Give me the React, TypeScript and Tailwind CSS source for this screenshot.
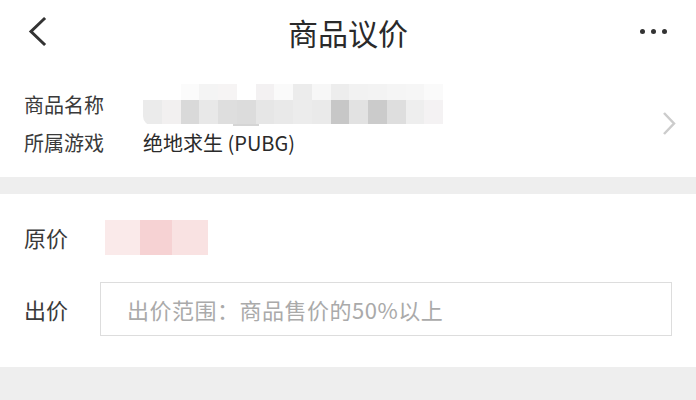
import React from "react";

const font = { fontFamily: '"Noto Sans CJK SC", "Noto Sans", sans-serif' };

function NameMosaic() {
  const top = ["#ffffff", "#ffffff", "#fbfbfb", "#f4f4f4", "#f6f4f4", "#ffffff", "#f3f1f2", "#fafafa", "#ececec", "#f7f7f7", "#ededed", "#f2f2f2", "#f3f3f3", "#f5f5f5", "#f6f6f6", "#fafafa"];
  const bottom = ["#ebebeb", "#f2f0f0", "#d9d9d9", "#e8e8e8", "#dedede", "#dcdcdc", "#e6e6e6", "#e9e9e9", "#ececec", "#eaeaea", "#c7c7c7", "#e2e2e2", "#cbcbcb", "#dedede", "#eeeeee", "#f4f2f3"];
  return (
    <div className="flex flex-col w-[300px] h-[42px] rounded-l-[10px] overflow-hidden">
      <div className="flex h-[16px]">
        {top.map((c, i) => (
          <div key={i} className="flex-1" style={{ background: c }} />
        ))}
      </div>
      <div className="flex h-[24px]">
        {bottom.map((c, i) => (
          <div key={i} className="flex-1" style={{ background: c }} />
        ))}
      </div>
      <div className="flex h-[2px]">
        <div className="w-[90px]" />
        <div className="w-[26px] bg-[#d5d5d5]" />
      </div>
    </div>
  );
}

export default function App() {
  return (
    <div className="w-[696px] h-[400px] bg-white overflow-hidden text-[#3a3a3a]" style={font}>
      {/* header */}
      <div className="relative h-[64px] flex items-center justify-center">
        <svg className="absolute left-[26px] top-[16px]" width="22" height="31" viewBox="0 0 22 31">
          <path d="M18 3 L5 15.5 L18 28" fill="none" stroke="#333" strokeWidth="3" strokeLinecap="square" />
        </svg>
        <div className="text-[30px] leading-none text-[#2a2a2a]">商品议价</div>
        <div className="absolute right-[29px] top-[29px] flex gap-[6px]">
          <div className="w-[5px] h-[5px] rounded-full bg-[#333]" />
          <div className="w-[5px] h-[5px] rounded-full bg-[#333]" />
          <div className="w-[5px] h-[5px] rounded-full bg-[#333]" />
        </div>
      </div>

      {/* product section */}
      <div className="relative h-[113px] pt-[22px] pl-[24px]">
        <div className="flex items-center h-[38px]">
          <div className="w-[119px] text-[20px] leading-none">商品名称</div>
          <NameMosaic />
        </div>
        <div className="flex items-center h-[38px]">
          <div className="w-[119px] text-[20px] leading-none">所属游戏</div>
          <div className="text-[20px] leading-none text-[#2a2a2a]">绝地求生 (PUBG)</div>
        </div>
        <svg className="absolute right-[20px] top-[47px]" width="14" height="25" viewBox="0 0 14 25">
          <path d="M2 2 L12 12.5 L2 23" fill="none" stroke="#cccccc" strokeWidth="2.5" />
        </svg>
      </div>

      <div className="h-[17px] bg-[#eeeeee]" />

      {/* price section */}
      <div className="h-[173px] pt-[23px] pl-[24px] pr-[24px]">
        <div className="flex items-center h-[40px]">
          <div className="w-[81px] text-[22px] leading-none">原价</div>
          <div className="flex h-[35px] w-[103px]">
            <div className="w-[35px] bg-[#faeaea]" />
            <div className="w-[32px] bg-[#f6d2d3]" />
            <div className="w-[36px] bg-[#f9e2e2]" />
          </div>
        </div>
        <div className="flex items-center mt-[25px]">
          <div className="w-[76px] text-[22px] leading-none">出价</div>
          <div className="flex-1 h-[54px] border border-[#dddddd] flex items-center pl-[26px]">
            <span className="text-[22px] leading-none tracking-[0.5px] text-[#aaaaaa]">出价范围：商品售价的50%以上</span>
          </div>
        </div>
      </div>

      <div className="h-[33px] bg-[#eeeeee]" />
    </div>
  );
}
